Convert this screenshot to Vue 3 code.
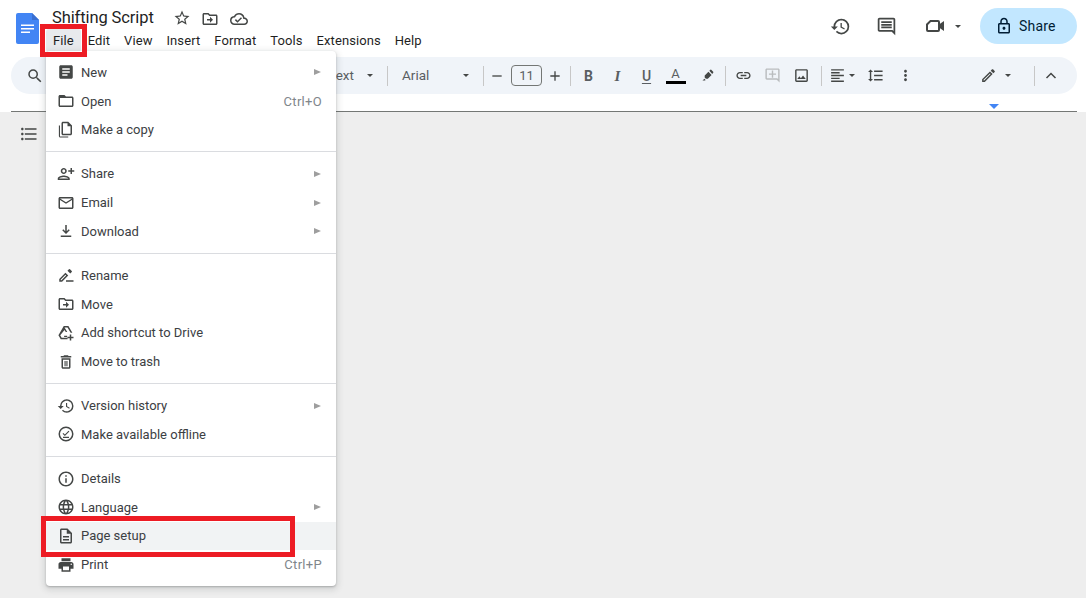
<script setup>
const p = {
  history: 'M13 3a9 9 0 0 0-9 9H1l3.89 3.89.07.14L9 12H6c0-3.87 3.13-7 7-7s7 3.13 7 7-3.13 7-7 7c-1.93 0-3.68-.79-4.94-2.06l-1.42 1.42A8.954 8.954 0 0 0 13 21a9 9 0 0 0 0-18zm-1 5v5l4.28 2.54.72-1.21-3.5-2.08V8H12z',
  comment: 'M20 17.17 18.83 16H4V4h16v13.17zM20 2H4c-1.1 0-2 .9-2 2v12c0 1.1.9 2 2 2h14l4 4V4c0-1.1-.9-2-2-2zM6 12h12v2H6zM6 9h12v2H6zM6 6h12v2H6z',
  lock: 'M18 8h-1V6c0-2.76-2.24-5-5-5S7 3.24 7 6v2H6c-1.1 0-2 .9-2 2v10c0 1.1.9 2 2 2h12c1.1 0 2-.9 2-2V10c0-1.1-.9-2-2-2zM9 6c0-1.66 1.34-3 3-3s3 1.34 3 3v2H9V6zm9 14H6V10h12v10zm-6-3c1.1 0 2-.9 2-2s-.9-2-2-2-2 .9-2 2 .9 2 2 2z',
  star: 'M22 9.24l-7.19-.62L12 2 9.19 8.63 2 9.24l5.46 4.73L5.82 21 12 17.27 18.18 21l-1.63-7.03L22 9.24zM12 15.4l-3.76 2.27 1-4.28-3.32-2.88 4.38-.38L12 6.1l1.71 4.04 4.38.38-3.32 2.88 1 4.28L12 15.4z',
  move: 'M20 6h-8l-2-2H4c-1.1 0-1.99.9-1.99 2L2 18c0 1.1.9 2 2 2h16c1.1 0 2-.9 2-2V8c0-1.1-.9-2-2-2zm0 12H4V6h5.17l2 2H20v10zM12 12H8v2h4v3l4-4-4-4v3z',
  cloud: 'M19.35 10.04A7.49 7.49 0 0 0 12 4C9.11 4 6.6 5.64 5.35 8.04A5.994 5.994 0 0 0 0 14c0 3.31 2.69 6 6 6h13c2.76 0 5-2.24 5-5 0-2.64-2.05-4.78-4.65-4.96zM19 18H6c-2.21 0-4-1.79-4-4 0-2.05 1.53-3.76 3.56-3.97l1.07-.11.5-.95A5.469 5.469 0 0 1 12 6c2.62 0 4.88 1.86 5.39 4.43l.3 1.5 1.53.11A2.98 2.98 0 0 1 22 15c0 1.65-1.35 3-3 3zm-9-3.82-2.09-2.09L6.5 13.5 10 17l6.01-6.01-1.41-1.41z',
  search: 'M15.5 14h-.79l-.28-.27A6.471 6.471 0 0 0 16 9.5 6.5 6.5 0 1 0 9.5 16c1.61 0 3.09-.59 4.23-1.57l.27.28v.79l5 4.99L20.49 19l-4.99-5zm-6 0C7.01 14 5 11.99 5 9.5S7.01 5 9.5 5 14 7.01 14 9.5 11.99 14 9.5 14z',
  list: 'M4 10.5c-.83 0-1.5.67-1.5 1.5s.67 1.5 1.5 1.5 1.5-.67 1.5-1.5-.67-1.5-1.5-1.5zm0-6c-.83 0-1.5.67-1.5 1.5S3.17 7.5 4 7.5 5.5 6.83 5.5 6 4.83 4.5 4 4.5zm0 12c-.83 0-1.5.68-1.5 1.5s.68 1.5 1.5 1.5 1.5-.68 1.5-1.5-.67-1.5-1.5-1.5zM7 19h14v-2H7v2zm0-6h14v-2H7v2zm0-8v2h14V5H7z',
  marker: 'M13.5 6l5 5-6 6h-3l-2-2v-3zM15 4.5l1.6-1.6a1 1 0 0 1 1.4 0l3.1 3.1a1 1 0 0 1 0 1.4L19.5 9.5zM4 20l3-3 2 2-1 1z',
  link: 'M3.9 12c0-1.71 1.39-3.1 3.1-3.1h4V7H7c-2.76 0-5 2.24-5 5s2.24 5 5 5h4v-1.9H7c-1.71 0-3.1-1.39-3.1-3.1zM8 13h8v-2H8v2zm9-6h-4v1.9h4c1.71 0 3.1 1.39 3.1 3.1s-1.39 3.1-3.1 3.1h-4V17h4c2.76 0 5-2.24 5-5s-2.24-5-5-5z',
  addComment: 'M22 4c0-1.1-.9-2-2-2H4c-1.1 0-2 .9-2 2v12c0 1.1.9 2 2 2h14l4 4V4zm-2 13.17L18.83 16H4V4h16v13.17zM13 5h-2v4H7v2h4v4h2v-4h4V9h-4z',
  image: 'M19 5v14H5V5h14m0-2H5c-1.1 0-2 .9-2 2v14c0 1.1.9 2 2 2h14c1.1 0 2-.9 2-2V5c0-1.1-.9-2-2-2zm-4.86 8.86l-3 3.87L9 13.14 6 17h12l-3.86-5.14z',
  align: 'M15 15H3v2h12v-2zm0-8H3v2h12V7zM3 13h18v-2H3v2zm0 8h18v-2H3v2zM3 3v2h18V3H3z',
  spacing: 'M6 7h2.5L5 3.5 1.5 7H4v10H1.5L5 20.5 8.5 17H6V7zm4-2v2h12V5H10zm0 14h12v-2H10v2zm0-6h12v-2H10v2z',
  dots: 'M12 8c1.1 0 2-.9 2-2s-.9-2-2-2-2 .9-2 2 .9 2 2 2zm0 2c-1.1 0-2 .9-2 2s.9 2 2 2 2-.9 2-2-.9-2-2-2zm0 6c-1.1 0-2 .9-2 2s.9 2 2 2 2-.9 2-2-.9-2-2-2z',
  edit: 'M3 17.25V21h3.75L17.81 9.94l-3.75-3.75L3 17.25zM5.92 19H5v-.92l9.06-9.06.92.92L5.92 19zM20.71 5.63l-2.34-2.34c-.2-.2-.45-.29-.71-.29s-.51.1-.7.29l-1.83 1.83 3.75 3.75 1.83-1.83c.39-.39.39-1.02 0-1.41z',
  article: 'M19 3H5c-1.1 0-2 .9-2 2v14c0 1.1.9 2 2 2h14c1.1 0 2-.9 2-2V5c0-1.1-.9-2-2-2zm-5 14H7v-2h7v2zm3-4H7v-2h10v2zm0-4H7V7h10v2z',
  folder: 'M20 6h-8l-2-2H4c-1.1 0-1.99.9-1.99 2L2 18c0 1.1.9 2 2 2h16c1.1 0 2-.9 2-2V8c0-1.1-.9-2-2-2zm0 12H4V8h16v10z',
  copy: 'M15 1H8c-1.1 0-2 .9-2 2v14c0 1.1.9 2 2 2h10c1.1 0 2-.9 2-2V6l-5-5zm3 16H8V3h6v4h4v10zM4 6H2.5v14c0 1.1.9 2 2 2H15v-1.5H4V6z',
  share: 'M9 12c2.21 0 4-1.79 4-4s-1.79-4-4-4-4 1.79-4 4 1.79 4 4 4zm0-6c1.1 0 2 .9 2 2s-.9 2-2 2-2-.9-2-2 .9-2 2-2zm0 8c-2.67 0-8 1.34-8 4v2h16v-2c0-2.66-5.33-4-8-4zm-6 4c.22-.72 3.31-2 6-2 2.7 0 5.8 1.29 6 2H3zm17-6V9h3V7h-3V4h-2v3h-3v2h3v3h2z',
  mail: 'M22 6c0-1.1-.9-2-2-2H4c-1.1 0-2 .9-2 2v12c0 1.1.9 2 2 2h16c1.1 0 2-.9 2-2V6zm-2 0l-8 5-8-5h16zm0 12H4V8l8 5 8-5v10z',
  download: 'M5 20h14v-2H5v2zM12 16l5-5-1.41-1.41L13 12.17V4h-2v8.17L8.41 9.59 7 11l5 5z',
  rename: 'M3 17.25V21h3.75L15 12.75 11.25 9 3 17.25zM5.92 19H5v-.92l6.25-6.25.92.92L5.92 19zM17.7 10.05l1.95-1.95a1 1 0 0 0 0-1.41l-2.34-2.34a1 1 0 0 0-1.41 0L13.95 6.3zM12 19h10v2H12z',
  drive: 'M9 2.5h6.2l5.3 9.2h-2.3L14 4.5h-3.9l3.6 6.3-2 0-1.7-2.9L4.3 15l1.9 3.3H14v2H5L1.9 15zM9.5 15.5h4v1.8h-4zM19 14v3h3v2h-3v3h-2v-3h-3v-2h3v-3z',
  trash: 'M6 19c0 1.1.9 2 2 2h8c1.1 0 2-.9 2-2V7H6v12zM8 9h8v10H8V9zm7.5-5l-1-1h-5l-1 1H5v2h14V4h-3.5zM10 10.5h1.5v7H10zM12.5 10.5H14v7h-1.5z',
  offline: 'M12 2a10 10 0 1 0 0 20 10 10 0 0 0 0-20zm0 18a8 8 0 1 1 0-16 8 8 0 0 1 0 16zM10.5 12.6l-2-2-1.1 1.1 3.1 3.1 6-6-1.1-1.1zM8 15.8h8v1.5H8z',
  info: 'M11 7h2v2h-2zm0 4h2v6h-2zm1-9C6.48 2 2 6.48 2 12s4.48 10 10 10 10-4.48 10-10S17.52 2 12 2zm0 18c-4.41 0-8-3.59-8-8s3.59-8 8-8 8 3.59 8 8-3.59 8-8 8z',
  language: 'M11.99 2C6.47 2 2 6.48 2 12s4.47 10 9.99 10C17.52 22 22 17.52 22 12S17.52 2 11.99 2zm6.93 6h-2.95a15.65 15.65 0 0 0-1.38-3.56A8.03 8.03 0 0 1 18.92 8zM12 4.04c.83 1.2 1.48 2.53 1.91 3.96h-3.82c.43-1.43 1.08-2.76 1.91-3.96zM4.26 14C4.1 13.36 4 12.69 4 12s.1-1.36.26-2h3.38c-.08.66-.14 1.32-.14 2s.06 1.34.14 2H4.26zm.82 2h2.95c.32 1.25.78 2.45 1.38 3.56A7.987 7.987 0 0 1 5.08 16zm2.95-8H5.08a7.987 7.987 0 0 1 4.33-3.56A15.65 15.65 0 0 0 8.03 8zM12 19.96c-.83-1.2-1.48-2.53-1.91-3.96h3.82c-.43 1.43-1.08 2.76-1.91 3.96zM14.34 14H9.66c-.09-.66-.16-1.32-.16-2s.07-1.35.16-2h4.68c.09.65.16 1.32.16 2s-.07 1.34-.16 2zm.25 5.56c.6-1.11 1.06-2.31 1.38-3.56h2.95a8.03 8.03 0 0 1-4.33 3.56zM16.36 14c.08-.66.14-1.32.14-2s-.06-1.34-.14-2h3.38c.16.64.26 1.31.26 2s-.1 1.36-.26 2h-3.38z',
  page: 'M8 16h8v2H8zm0-4h8v2H8zm6-10H6c-1.1 0-2 .9-2 2v16c0 1.1.89 2 1.99 2H18c1.1 0 2-.9 2-2V8l-6-6zm4 18H6V4h7v5h5v11z',
  print: 'M19 8H5c-1.66 0-3 1.34-3 3v6h4v4h12v-4h4v-6c0-1.66-1.34-3-3-3zm-3 11H8v-5h8v5zm3-7c-.55 0-1-.45-1-1s.45-1 1-1 1 .45 1 1-.45 1-1 1zm-1-9H6v4h12V3z'
}

const menubar = ['File', 'Edit', 'View', 'Insert', 'Format', 'Tools', 'Extensions', 'Help']

const sections = [
  [
    { label: 'New', icon: p.article, sub: true },
    { label: 'Open', icon: p.folder, key: 'Ctrl+O' },
    { label: 'Make a copy', icon: p.copy }
  ],
  [
    { label: 'Share', icon: p.share, sub: true },
    { label: 'Email', icon: p.mail, sub: true },
    { label: 'Download', icon: p.download, sub: true }
  ],
  [
    { label: 'Rename', icon: p.rename },
    { label: 'Move', icon: p.move },
    { label: 'Add shortcut to Drive', icon: p.drive },
    { label: 'Move to trash', icon: p.trash }
  ],
  [
    { label: 'Version history', icon: p.history, sub: true },
    { label: 'Make available offline', icon: p.offline }
  ],
  [
    { label: 'Details', icon: p.info },
    { label: 'Language', icon: p.language, sub: true },
    { label: 'Page setup', icon: p.page, active: true },
    { label: 'Print', icon: p.print, key: 'Ctrl+P' }
  ]
]
</script>

<template>
  <div class="app">
    <header class="header">
      <svg class="logo" viewBox="0 0 23 31" width="23" height="31">
        <path fill="#4285f4" d="M2 0h14l7 7v22a2 2 0 0 1-2 2H2a2 2 0 0 1-2-2V2a2 2 0 0 1 2-2z" />
        <path fill="#3a6fd0" d="M16 0l7 7h-7z" />
        <path fill="#fff" d="M5 11.5h13v1.6H5zM5 15h13v1.6H5zM5 18.5h9v1.6H5z" />
      </svg>
      <div class="title-col">
        <div class="title-row">
          <span class="title">Shifting Script</span>
          <svg class="t-star" viewBox="0 0 24 24"><path :d="p.star" /></svg>
          <svg class="t-move" viewBox="0 0 24 24"><path :d="p.move" /></svg>
          <svg class="t-cloud" viewBox="0 0 24 24"><path :d="p.cloud" /></svg>
        </div>
        <nav class="menubar">
          <span v-for="m in menubar" :key="m" class="mb-item" :class="{ open: m === 'File' }">{{ m }}</span>
        </nav>
      </div>
      <div class="actions">
        <svg class="a-icon" viewBox="0 0 24 24"><path :d="p.history" /></svg>
        <svg class="a-icon a-comment" viewBox="0 0 24 24"><path :d="p.comment" /></svg>
        <svg class="a-meet" viewBox="0 0 24 24" width="24" height="24">
          <path d="M7.5 7H15a1 1 0 0 1 1 1v8a1 1 0 0 1-1 1H5a1 1 0 0 1-1-1v-5.5z" fill="none" stroke="#444746" stroke-width="2" />
          <path d="M16 10.5 21 7v10l-5-3.5z" />
        </svg>
        <i class="caret a-caret"></i>
        <button class="share-btn">
          <svg viewBox="0 0 24 24" width="18" height="18"><path :d="p.lock" /></svg>
          <span>Share</span>
        </button>
      </div>
    </header>

    <div class="toolbar">
      <svg class="tb-search" viewBox="0 0 24 24"><path :d="p.search" /></svg>
      <div class="sel-style"><span>Normal text</span><i class="caret"></i></div>
      <i class="tb-div d-style"></i>
      <div class="sel-font"><span>Arial</span><i class="caret"></i></div>
      <i class="tb-div d-font"></i>
      <span class="tb-size-btn">
        <svg viewBox="0 0 24 24" width="16" height="16"><path d="M5 11h14v2H5z" /></svg>
      </span>
      <span class="size-box">11</span>
      <span class="tb-size-btn">
        <svg viewBox="0 0 24 24" width="16" height="16"><path d="M19 13h-6v6h-2v-6H5v-2h6V5h2v6h6z" /></svg>
      </span>
      <i class="tb-div d-size"></i>
      <span class="tb-btn g-first fmt fmt-b">B</span>
      <span class="tb-btn fmt fmt-i">I</span>
      <span class="tb-btn fmt fmt-u">U</span>
      <span class="tb-btn fmt fmt-a">A</span>
      <span class="tb-btn g-first">
        <svg viewBox="0 0 24 24" width="15" height="15"><path :d="p.marker" /></svg>
      </span>
      <i class="tb-div d-fmt"></i>
      <span class="tb-btn g-first">
        <svg viewBox="0 0 24 24" width="17" height="17"><path :d="p.link" /></svg>
      </span>
      <span class="tb-btn faded">
        <svg viewBox="0 0 24 24" width="17" height="17"><path :d="p.addComment" /></svg>
      </span>
      <span class="tb-btn">
        <svg viewBox="0 0 24 24" width="17" height="17"><path :d="p.image" /></svg>
      </span>
      <i class="tb-div d-insert"></i>
      <span class="tb-narrow n-align">
        <svg viewBox="0 0 24 24" width="17" height="17"><path :d="p.align" /></svg>
      </span>
      <i class="caret c-align"></i>
      <span class="tb-narrow n-spacing">
        <svg viewBox="0 0 24 24" width="17" height="17"><path :d="p.spacing" /></svg>
      </span>
      <span class="tb-narrow n-gap">
        <svg viewBox="0 0 24 24" width="17" height="17"><path :d="p.dots" /></svg>
      </span>
      <div class="tb-right">
        <svg viewBox="0 0 24 24" width="17" height="17"><path :d="p.edit" /></svg>
        <i class="caret c-edit"></i>
        <i class="tb-div"></i>
        <svg class="chevron" viewBox="0 0 24 24" width="24" height="24">
          <path d="M7.5 14l4.5-4.5 4.5 4.5" fill="none" stroke="#444746" stroke-width="1.5" />
        </svg>
      </div>
    </div>

    <div class="ruler"><i class="ruler-mark"></i></div>
    <div class="ruler-line"></div>

    <main class="canvas">
      <svg viewBox="0 0 24 24" width="20" height="20"><path :d="p.list" /></svg>
    </main>

    <div class="menu">
      <div v-for="(section, i) in sections" :key="i" class="section">
        <div v-for="item in section" :key="item.label" class="row" :class="{ active: item.active }">
          <svg viewBox="0 0 24 24" width="18" height="18"><path :d="item.icon" /></svg>
          <span class="row-label">{{ item.label }}</span>
          <span v-if="item.key" class="row-key">{{ item.key }}</span>
          <i v-if="item.sub" class="row-arrow"></i>
        </div>
      </div>
    </div>

    <div class="mark mark-file"></div>
    <div class="mark mark-page"></div>
  </div>
</template>

<style>
html, body {
  margin: 0;
  background: #fff;
}
</style>

<style scoped>
.app {
  position: relative;
  width: 1086px;
  height: 598px;
  overflow: hidden;
  display: flex;
  flex-direction: column;
  background: #fff;
  font-family: Roboto, "Liberation Sans", sans-serif;
  color: #3c4043;
}

svg {
  display: block;
  flex: none;
  fill: #444746;
}

.header {
  display: flex;
  height: 57px;
  flex: none;
}

.logo {
  margin: 13px 0 0 16px;
}

.title-col {
  margin-left: 7px;
  padding-top: 7px;
}

.title-row {
  display: flex;
  align-items: center;
  height: 22px;
  padding-left: 6px;
}

.title {
  width: 101px;
  font-size: 16.5px;
  line-height: 22px;
  letter-spacing: -0.1px;
  color: #1f1f1f;
  white-space: nowrap;
}

.title-row svg {
  width: 18px;
  height: 18px;
  margin-top: 1px;
}

.t-star { margin-left: 20px; margin-top: 0 !important; }
.t-move { margin-left: 10px; }
.t-cloud { margin-left: 11px; }

.menubar {
  display: flex;
}

.mb-item {
  height: 23px;
  padding: 0 7px;
  border-radius: 3px;
  font-size: 13px;
  line-height: 23px;
  letter-spacing: 0.08px;
  color: #1f1f1f;
}

.mb-item.open {
  background: #e8eaed;
}

.actions {
  display: flex;
  align-items: center;
  height: 36px;
  margin: 8px 9px 0 auto;
}

.a-icon {
  width: 21px;
  height: 21px;
}

.a-comment { margin-left: 25px; }
.a-meet { margin-left: 26px; }
.a-caret { margin-left: 8px; }

.caret {
  display: block;
  flex: none;
  width: 0;
  height: 0;
  border-left: 3.5px solid transparent;
  border-right: 3.5px solid transparent;
  border-top: 3.5px solid #444746;
}

.share-btn {
  display: flex;
  align-items: center;
  gap: 6px;
  width: 97px;
  height: 36px;
  margin-left: 19px;
  padding: 0 0 0 15px;
  border: 0;
  border-radius: 18px;
  background: #c2e7ff;
  font: 400 14px Roboto, sans-serif;
  letter-spacing: 0.2px;
  color: #001d35;
}

.share-btn svg {
  fill: #001d35;
}

.toolbar {
  display: flex;
  align-items: center;
  flex: none;
  height: 37px;
  margin: 0 9px 0 11px;
  padding-left: 14px;
  border-radius: 19px;
  background: #f0f4f9;
  font-size: 13.5px;
  color: #5a5e62;
}

.tb-search {
  width: 18px;
  height: 18px;
  margin: 0 1px;
}

.sel-style {
  display: flex;
  align-items: center;
  justify-content: flex-end;
  gap: 13px;
  width: 333px;
  padding-right: 5px;
  box-sizing: border-box;
  white-space: nowrap;
}

.sel-style span,
.sel-font span {
  margin-top: -2px;
}

.tb-div {
  display: block;
  flex: none;
  width: 1px;
  height: 20px;
  background: #c7c7c7;
}

.d-style { margin-left: 9px; }
.d-font { margin-left: 9px; }
.d-size { margin-left: 2px; }
.d-fmt { margin-left: 3px; }
.d-insert { margin-left: 5px; }

.sel-font {
  display: flex;
  align-items: center;
  justify-content: space-between;
  width: 72px;
  margin-left: 14px;
  padding-right: 5px;
  box-sizing: border-box;
}

.tb-size-btn {
  display: flex;
  align-items: center;
  justify-content: center;
  width: 26px;
}

.size-box {
  width: 31px;
  height: 21px;
  margin-left: 1px;
  box-sizing: border-box;
  border: 1px solid #747775;
  border-radius: 4px;
  font-size: 13px;
  line-height: 19px;
  text-align: center;
}

.tb-btn {
  display: flex;
  align-items: center;
  justify-content: center;
  flex: none;
  width: 29px;
  height: 24px;
}

.g-first { margin-left: 3px; }
.faded svg { fill: #b9bcbe; }

.fmt {
  font-size: 14px;
  line-height: 24px;
}

.fmt-b { font-weight: 700; }
.fmt-i {
  font-family: "Liberation Serif", serif;
  font-style: italic;
  font-weight: 700;
  font-size: 15px;
}
.fmt-u {
  font-weight: 500;
  text-decoration: underline;
  text-underline-offset: 2px;
}
.fmt-a {
  flex-direction: column;
  line-height: 12px;
  font-size: 13px;
}
.fmt-a::after {
  content: "";
  width: 20px;
  height: 3px;
  margin-top: 1px;
  background: #000;
}

.tb-narrow {
  display: flex;
  align-items: center;
  justify-content: center;
  flex: none;
  width: 24px;
}

.n-align { margin-left: 3px; }
.n-spacing { margin-left: 8px; }
.n-gap { margin-left: 6px; }

.tb-right {
  display: flex;
  align-items: center;
  margin-left: auto;
  padding-right: 14px;
}

.c-edit {
  margin: 0 23px 0 8px;
  border-left-width: 3px;
  border-right-width: 3px;
  border-top-width: 3px;
}

.chevron {
  margin-left: 4px;
}

.ruler {
  flex: none;
  height: 17px;
  padding: 10px 0 0 989px;
  box-sizing: border-box;
}

.ruler-mark {
  display: block;
  width: 0;
  height: 0;
  border-left: 5px solid transparent;
  border-right: 5px solid transparent;
  border-top: 5px solid #4285f4;
}

.ruler-line {
  flex: none;
  height: 1px;
  margin: 0 9px 0 11px;
  background: #747775;
}

.canvas {
  flex: 1;
  padding: 12px 0 0 19px;
  background: #eeeeee;
}

.menu {
  position: absolute;
  left: 46px;
  top: 51px;
  width: 290px;
  padding: 7px 0;
  box-sizing: border-box;
  border-radius: 4px;
  background: #fff;
  box-shadow: 0 2px 6px 2px rgba(60, 64, 67, 0.15), 0 1px 2px rgba(60, 64, 67, 0.3);
}

.section + .section {
  margin-top: 7px;
  padding-top: 7.5px;
  border-top: 1px solid #dadce0;
}

.row {
  display: flex;
  align-items: center;
  height: 28.7px;
  padding: 0 14px 0 11px;
  font-size: 13px;
  color: #3c4043;
}

.row.active {
  background: #f1f3f4;
}

.row-label {
  margin-left: 6px;
}

.row-key {
  margin-left: auto;
  letter-spacing: 0.3px;
  color: #80868b;
}

.row-arrow {
  display: block;
  width: 0;
  height: 0;
  margin: 0 1px 0 auto;
  border-top: 3px solid transparent;
  border-bottom: 3px solid transparent;
  border-left: 7px solid #9e9e9e;
}

.mark {
  position: absolute;
  box-sizing: border-box;
  border: 5px solid #ed1c24;
}

.mark-file {
  left: 40px;
  top: 24px;
  width: 47px;
  height: 33px;
}

.mark-page {
  left: 41px;
  top: 516px;
  width: 254px;
  height: 41px;
}
</style>
